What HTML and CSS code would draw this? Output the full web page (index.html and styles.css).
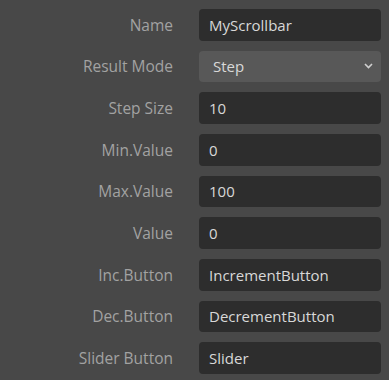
FILE: index.html
```html
<!DOCTYPE html>
<html lang="en">
<head>
    <meta charset="UTF-8">
    <meta name="viewport" content="width=device-width, initial-scale=1.0">
    <title>Scrollbar Properties</title>
    <link rel="stylesheet" href="styles.css">
</head>
<body>

    <form class="props">
        <label for="name">Name</label>
        <input type="text" id="name" value="MyScrollbar">

        <label for="mode">Result Mode</label>
        <div class="select">
            <span>Step</span>
            <svg width="9" height="6" viewBox="0 0 9 6"><path d="M1 1 L4.5 4.5 L8 1" fill="none" stroke="#d0d0d0" stroke-width="1.6"/></svg>
        </div>

        <label for="step">Step Size</label>
        <input type="text" id="step" value="10">

        <label for="min">Min.Value</label>
        <input type="text" id="min" value="0">

        <label for="max">Max.Value</label>
        <input type="text" id="max" value="100">

        <label for="value">Value</label>
        <input type="text" id="value" value="0">

        <label for="inc">Inc.Button</label>
        <input type="text" id="inc" value="IncrementButton">

        <label for="dec">Dec.Button</label>
        <input type="text" id="dec" value="DecrementButton">

        <label for="slider">Slider Button</label>
        <input type="text" id="slider" value="Slider">
    </form>

</body>
</html>
```

FILE: styles.css
```css
/* General reset */
* {
    margin: 0;
    padding: 0;
    box-sizing: border-box;
    font-family: "Open Sans", "Noto Sans", sans-serif;
}

body {
    background-color: #484848;
    width: 389px;
    height: 380px;
    overflow: hidden;
}

.props {
    display: grid;
    grid-template-columns: 173px 182px;
    grid-auto-rows: 31.67px;
    column-gap: 26px;
    row-gap: 10px;
    padding-top: 9px;
    align-items: center;
}

label {
    text-align: right;
    font-size: 15.5px;
    color: #a2a2a2;
}

input,
.select {
    height: 100%;
    width: 100%;
    border: none;
    border-radius: 4px;
    font-size: 15px;
    color: #d8d8d8;
    outline: none;
}

input {
    padding: 0 10px;
    background-color: #2d2d2d;
}

.select {
    display: flex;
    align-items: center;
    justify-content: space-between;
    padding: 0 8px 0 14px;
    background-color: #585858;
}
```
